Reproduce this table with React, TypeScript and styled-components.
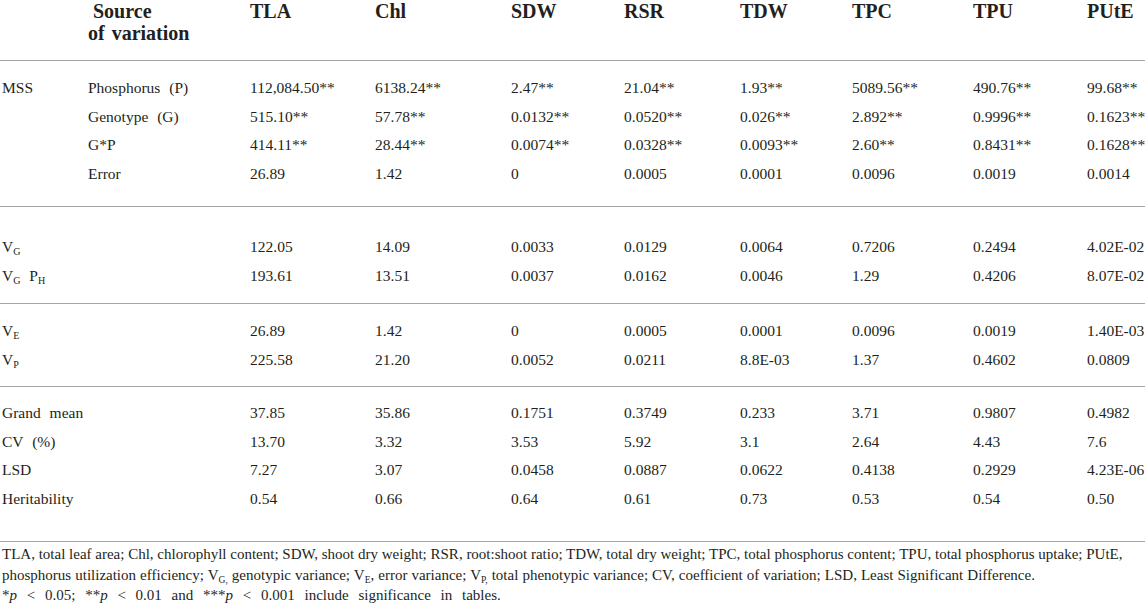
import React from "react"
import styled, { createGlobalStyle } from "styled-components"

const GlobalStyle = createGlobalStyle`
  html, body {
    margin: 0;
    padding: 0;
    background: #ffffff;
  }
  body {
    font-family: "Liberation Serif", "DejaVu Serif", serif;
    color: #231f20;
  }
`

const SERIF = `"Liberation Serif", "DejaVu Serif", serif`
const COLUMNS = "86px 162px 125px 136px 113px 116px 112px 121px 114px 1fr"

type Label = { main: string; sub?: string }[]

type DataRow = {
  label: Label
  factor?: string
  values: string[]
}

const lbl = (...parts: [string, string?][]): Label =>
  parts.map(([main, sub]) => ({ main, sub }))

const groups: { top: number; bottom: number; rows: DataRow[] }[] = [
  {
    top: 13,
    bottom: 18,
    rows: [
      {
        label: lbl(["MSS"]),
        factor: "Phosphorus (P)",
        values: ["112,084.50**", "6138.24**", "2.47**", "21.04**", "1.93**", "5089.56**", "490.76**", "99.68**"],
      },
      {
        label: [],
        factor: "Genotype (G)",
        values: ["515.10**", "57.78**", "0.0132**", "0.0520**", "0.026**", "2.892**", "0.9996**", "0.1623**"],
      },
      {
        label: [],
        factor: "G*P",
        values: ["414.11**", "28.44**", "0.0074**", "0.0328**", "0.0093**", "2.60**", "0.8431**", "0.1628**"],
      },
      {
        label: [],
        factor: "Error",
        values: ["26.89", "1.42", "0", "0.0005", "0.0001", "0.0096", "0.0019", "0.0014"],
      },
    ],
  },
  {
    top: 26,
    bottom: 13,
    rows: [
      {
        label: lbl(["V", "G"]),
        values: ["122.05", "14.09", "0.0033", "0.0129", "0.0064", "0.7206", "0.2494", "4.02E-02"],
      },
      {
        label: lbl(["V", "G"], [" P", "H"]),
        values: ["193.61", "13.51", "0.0037", "0.0162", "0.0046", "1.29", "0.4206", "8.07E-02"],
      },
    ],
  },
  {
    top: 13,
    bottom: 12,
    rows: [
      {
        label: lbl(["V", "E"]),
        values: ["26.89", "1.42", "0", "0.0005", "0.0001", "0.0096", "0.0019", "1.40E-03"],
      },
      {
        label: lbl(["V", "P"]),
        values: ["225.58", "21.20", "0.0052", "0.0211", "8.8E-03", "1.37", "0.4602", "0.0809"],
      },
    ],
  },
  {
    top: 12,
    bottom: 28,
    rows: [
      {
        label: lbl(["Grand mean"]),
        values: ["37.85", "35.86", "0.1751", "0.3749", "0.233", "3.71", "0.9807", "0.4982"],
      },
      {
        label: lbl(["CV (%)"]),
        values: ["13.70", "3.32", "3.53", "5.92", "3.1", "2.64", "4.43", "7.6"],
      },
      {
        label: lbl(["LSD"]),
        values: ["7.27", "3.07", "0.0458", "0.0887", "0.0622", "0.4138", "0.2929", "4.23E-06"],
      },
      {
        label: lbl(["Heritability"]),
        values: ["0.54", "0.66", "0.64", "0.61", "0.73", "0.53", "0.54", "0.50"],
      },
    ],
  },
]

const headings = ["TLA", "Chl", "SDW", "RSR", "TDW", "TPC", "TPU", "PUtE"]

const App = () => {
  return (
    <>
      <GlobalStyle />
      <Page>
        <HeadRow>
          <HeadCell />
          <HeadCell>
            <Indent>Source</Indent>
            <br />
            of variation
          </HeadCell>
          {headings.map((h) => (
            <HeadCell key={h}>{h}</HeadCell>
          ))}
        </HeadRow>

        {groups.map((group, gi) => (
          <React.Fragment key={gi}>
            <Rule />
            <Group $top={group.top} $bottom={group.bottom}>
              {group.rows.map((row, ri) => (
                <Row key={ri}>
                  <Cell>
                    {row.label.map((part, pi) => (
                      <React.Fragment key={pi}>
                        {part.main}
                        {part.sub && <Sub>{part.sub}</Sub>}
                      </React.Fragment>
                    ))}
                  </Cell>
                  <Cell>{row.factor}</Cell>
                  {row.values.map((v, vi) => (
                    <Cell key={vi}>{v}</Cell>
                  ))}
                </Row>
              ))}
            </Group>
          </React.Fragment>
        ))}

        <Rule />
        <Footnote>
          <Line $spacing={0}>
            TLA, total leaf area; Chl, chlorophyll content; SDW, shoot dry weight; RSR, root:shoot ratio; TDW,
            total dry weight; TPC, total phosphorus content; TPU, total phosphorus uptake; PUtE,
          </Line>
          <Line $spacing={0.3}>
            phosphorus utilization efficiency; V<FootSub>G,</FootSub> genotypic variance; V
            <FootSub>E</FootSub>, error variance; V<FootSub>P,</FootSub> total phenotypic variance; CV,
            coefficient of variation; LSD, Least Significant Difference.
          </Line>
          <Line $spacing={6}>
            *<i>p</i> &lt; 0.05; **<i>p</i> &lt; 0.01 and ***<i>p</i> &lt; 0.001 include significance in
            tables.
          </Line>
        </Footnote>
      </Page>
    </>
  )
}

const Page = styled.div`
  width: 1145px;
  height: 606px;
  overflow: hidden;
`

const HeadRow = styled.div`
  display: grid;
  grid-template-columns: ${COLUMNS};
  padding-left: 2px;
  height: 60px;
`

const HeadCell = styled.div`
  font-family: ${SERIF};
  font-size: 20px;
  font-weight: 700;
  line-height: 22px;
  white-space: nowrap;
  word-spacing: 2px;
`

const Indent = styled.span`
  padding-left: 5px;
`

const Rule = styled.div`
  height: 0;
  border-top: 1.5px solid #a3a3a3;
`

const Group = styled.div<{ $top: number; $bottom: number }>`
  padding-top: ${(p) => p.$top}px;
  padding-bottom: ${(p) => p.$bottom}px;
`

const Row = styled.div`
  display: grid;
  grid-template-columns: ${COLUMNS};
  padding-left: 2px;
  height: 28.5px;
  align-items: center;
`

const Cell = styled.div`
  font-size: 15.5px;
  white-space: nowrap;
  word-spacing: 5px;
`

const Sub = styled.sub`
  font-size: 10px;
  vertical-align: -3px;
  line-height: 0;
`

const Footnote = styled.div`
  padding: 2px 2px 0;
  font-size: 15px;
  line-height: 20.5px;
`

const Line = styled.div<{ $spacing: number }>`
  white-space: nowrap;
  word-spacing: ${(p) => p.$spacing}px;
`

const FootSub = styled.sub`
  font-size: 9.5px;
  vertical-align: -3px;
  line-height: 0;
`

export default App
